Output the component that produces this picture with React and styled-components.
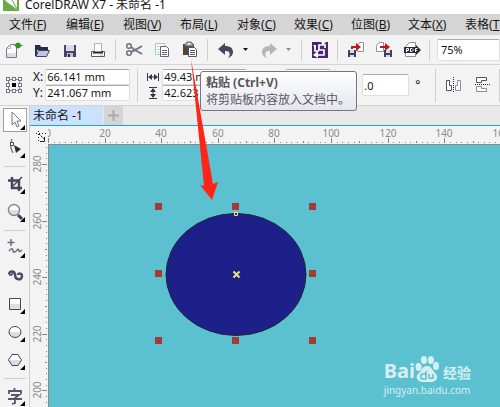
import React from "react";
import styled, { createGlobalStyle } from "styled-components";

const Global = createGlobalStyle`
  *, *::before, *::after { box-sizing: border-box; }
  html, body, #root { height: 100%; }
  body {
    margin: 0;
    overflow: hidden;
    background: #f3f3f3;
    color: #151515;
    font: 12px/16px "Noto Sans", "Noto Sans CJK SC", sans-serif;
  }
  button, input {
    font: inherit;
    color: inherit;
    margin: 0;
  }
  button { padding: 0; border: 0; background: none; }
  svg { display: block; flex: none; }
`;

const Window = styled.div`
  position: relative;
  display: flex;
  flex-direction: column;
  height: 100%;
  overflow: hidden;
`;

const TitleBar = styled.header`
  display: flex;
  align-items: flex-end;
  gap: 6px;
  height: 14px;
  flex: none;
  padding-left: 3px;
  overflow: hidden;
  background: #fff;
  white-space: nowrap;
`;

const Title = styled.span`
  line-height: 16px;
  padding-bottom: 1px;
`;

const LogoBox = styled.span`
  padding-bottom: 3px;
`;

const MenuBar = styled.nav`
  display: flex;
  gap: 18px;
  height: 21px;
  flex: none;
  padding-left: 9px;
  background: #d5d5d5;
`;

const MenuItem = styled.button`
  flex: none;
  min-width: 39px;
  line-height: 21px;
  text-align: left;
  white-space: nowrap;
`;

const ToolBar = styled.div`
  display: flex;
  align-items: center;
  height: 30px;
  flex: none;
  border-bottom: 1px solid #d4d4d4;
`;

const ToolButton = styled.button`
  display: flex;
  align-items: center;
  justify-content: center;
  flex: none;
  width: ${(p) => (p.$narrow ? 10 : 28)}px;
  height: 28px;
  margin-right: ${(p) => (p.$narrow ? 5 : 0)}px;
`;

const Divider = styled.span`
  flex: none;
  width: 1px;
  height: ${(p) => (p.$tall ? 33 : 22)}px;
  margin: 0 4px 0 3px;
  background: #cfcfcf;
`;

const ToolDivider = styled.span`
  flex: none;
  width: 22px;
  height: 1px;
  margin: 4px 0 3px 4px;
  background: #cfcfcf;
`;

const Field = styled.input`
  min-width: 0;
  width: ${(p) => p.$width}px;
  height: ${(p) => p.$height}px;
  padding: 0 1px;
  border: 1px solid #dedede;
  border-top-color: #a9a9b0;
  border-radius: 2px;
  background: #fff;
  font-size: 11px;
  flex: none;
  outline: 0;
`;

const ZoomField = styled(Field)`
  flex: 1;
  margin-left: 3px;
  padding-left: 3px;
`;

const PropertyBar = styled.div`
  display: flex;
  align-items: center;
  height: 41px;
  flex: none;
  padding-left: 5px;
  border-bottom: 1px solid #d4d4d4;
`;

const FieldPair = styled.div`
  display: grid;
  grid-template-columns: auto auto;
  grid-auto-rows: 16px;
  column-gap: 2px;
  align-items: center;
  margin: 0 ${(p) => p.$after}px 0 ${(p) => p.$before}px;
`;

const Label = styled.label`
  line-height: 16px;
`;

const AngleLabel = styled.label`
  display: flex;
  align-items: center;
  gap: 6px;
  margin: 0 12px 0 23px;
`;

const Workspace = styled.div`
  display: flex;
  flex: 1;
  min-height: 0;
`;

const Toolbox = styled.aside`
  display: flex;
  flex-direction: column;
  width: 30px;
  flex: none;
  border-right: 1px solid #cdcdcd;
  overflow: hidden;
`;

const Tool = styled.button`
  display: flex;
  align-items: center;
  justify-content: center;
  flex: none;
  width: 24px;
  height: 24px;
  margin: 2px 3px;
  border: 1px solid ${(p) => (p.$active ? "#a0a0a0" : "transparent")};
  background: ${(p) => (p.$active ? "#fff" : "none")};
`;

const DocumentArea = styled.main`
  display: flex;
  flex-direction: column;
  flex: 1;
  min-width: 0;
`;

const Tabs = styled.div`
  display: flex;
  gap: 1px;
  height: 20px;
  flex: none;
  background: #e9e9e9;
  border-bottom: 1px solid #18a4e8;
`;

const Tab = styled.button`
  width: 73px;
  padding-left: 3px;
  line-height: 18px;
  text-align: left;
  white-space: nowrap;
  background: #cce1ff;
`;

const AddTab = styled.button`
  display: grid;
  place-items: center;
  width: 19px;
  background: #d5d5d5;
`;

const DrawingGrid = styled.div`
  display: grid;
  grid-template: 18px 1fr / 18px 1fr;
  flex: 1;
  min-height: 0;
`;

const Ruler = styled.div`
  overflow: hidden;
  min-width: 0;
  min-height: 0;

  text {
    font: 10px "Noto Sans", sans-serif;
    fill: #8b8b8b;
    text-anchor: middle;
  }
`;

const Canvas = styled.div`
  position: relative;
  overflow: hidden;
  min-height: 0;
  border: solid #858b8d;
  border-width: 1px 0 0 1px;
  background: #5bc0cf;
`;

const Artwork = styled.svg`
  position: absolute;
  left: 0;
  top: 0;
`;

const Tooltip = styled.div`
  position: absolute;
  left: 200px;
  top: 71px;
  width: 157px;
  height: 40px;
  padding: 2px 5px;
  border: 1px solid #767676;
  border-radius: 3px;
  background: linear-gradient(#fff, #e4e5f0);
  color: #575757;
  line-height: 18px;
  white-space: nowrap;
`;

const TipTitle = styled.strong`
  display: block;
  line-height: 17px;
`;

const Pointer = styled.svg`
  position: absolute;
  left: 185px;
  top: 55px;
  pointer-events: none;
`;

const Watermark = styled.div`
  position: absolute;
  right: 29px;
  bottom: 10px;
  color: #d5eff3;
  font-size: 10px;
  line-height: 14px;
`;

const Brand = styled.div`
  display: flex;
  align-items: flex-end;
  height: 30px;
  font: bold 20px/24px "Noto Sans", sans-serif;
`;

const BrandName = styled.span`
  margin-left: 4px;
  font: bold 14px/22px "Noto Sans CJK SC", sans-serif;
`;

const INK = "#46455f";

const Icon = ({ size = 18, children }) => (
  <svg width={size} height={size} viewBox={`0 0 ${size} ${size}`} fill="none" stroke={INK} aria-hidden="true">
    {children}
  </svg>
);

const NewIcon = () => (
  <Icon>
    <path d="M1.5 7.500 5.500 3.500H11.500V16.500H1.500z" fill="#fff" stroke="#777789" />
    <path d="M1.500 7.500h4v-4M3 13h7" stroke="#b9b9c8" />
    <path d="M2 12h9v4H2z" fill="#dedee6" stroke="none" />
    <circle cx="13" cy="4.500" r="2.800" fill="#32951b" stroke="none" />
    <path d="M9.500 4.500h8M13 1.500v6" stroke="#32951b" />
  </Icon>
);
const OpenIcon = () => (
  <Icon>
    <path d="M2 4h5l1 2h7v3H4v6H2z" fill="#292c48" stroke="none" />
    <path d="M5.5 9.5h11l-3 6H3z" fill="#c4c5e3" />
  </Icon>
);
const SaveIcon = () => (
  <Icon>
    <path d="M3 4h12v12H3z" fill="#454567" stroke="none" />
    <path d="M5 4h8v6H5z" fill="#d9daed" stroke="none" />
    <path d="M6 12h6v4H6z" fill="#c1c1d0" stroke="none" />
    <path d="M7 13h2v3H7z" fill="#292c48" stroke="none" />
  </Icon>
);
const PrintIcon = () => (
  <Icon>
    <path d="M2.5 10.5h13v5h-13z" fill="#f9f9fc" stroke="#57576b" />
    <path d="M5.5 11V2.5h7V11" fill="#fff" stroke="#92bfc1" />
    <path d="M4 11.5h10" stroke="#25253b" strokeWidth="2" />
    <path d="M11 14h3" stroke="#bacb35" />
  </Icon>
);
const CutIcon = () => (
  <Icon>
    <circle cx="4" cy="5" r="2.3" strokeWidth="1.5" stroke="#6e6e84" />
    <circle cx="4" cy="12" r="2.3" strokeWidth="1.5" stroke="#6e6e84" />
    <path d="m6 6 4 3 7 4M6 11l4-2 7-4" stroke="#777783" strokeWidth="2" />
  </Icon>
);
const CopyIcon = () => (
  <Icon>
    <path d="M2.5 2.5h9v11h-9z" fill="#f7ffff" stroke="#a4cac5" />
    <path d="M4.5 5.5h2M4.5 8.5h2M4.5 11.5h2" stroke="#a4cac5" />
    <path d="M7.5 5.5h6l2 2v8h-8z" fill="#fff" stroke="#656577" />
    <path d="M9 9.5h5M9 11.5h5M9 13.5h5" stroke="#626277" />
  </Icon>
);
const PasteIcon = () => (
  <Icon>
    <path d="M2 3h11v11H2z" fill="#554735" stroke="none" />
    <path d="M4 5V3l2-2h4l2 2v2z" fill="#a9b7a7" stroke="#566b63" />
    <circle cx="8" cy="3" r="1" fill="#fff" stroke="none" />
    <path d="M7.5 6.5h6l2 2v7h-8z" fill="#fff" stroke="#55556c" />
    <path d="M9 9.5h5M9 11.5h5M9 13.5h5" stroke="#555570" />
  </Icon>
);
const UndoIcon = ({ redo }) => (
  <Icon>
    <path
      transform={redo ? "matrix(-1 0 0 1 18 0)" : undefined}
      d="M8 2v3c5 0 8 2 8 6 0 3-2 5-5 6 2-2 2-5 1-6-1-1-2-1-4-1v4L1 8z"
      fill={redo ? "#b5b5b5" : INK}
      stroke="none"
    />
  </Icon>
);
const Caret = ({ muted }) => (
  <svg width="5" height="4" viewBox="0 0 5 4" aria-hidden="true">
    <path d="M0 0h5L2.5 3z" fill={muted ? "#919191" : "#111"} />
  </svg>
);
const ConnectIcon = () => (
  <Icon>
    <path d="M1 1h16v16H1z" fill="#49266e" stroke="none" />
    <path d="M12 1v3H8v5h5v5H5M4 4v6h4M14 7V3" stroke="#fff" strokeWidth="1.7" />
    <path d="m7 10-5 4 5 3z" fill="#fff" stroke="none" />
    <path d="m10 1 5 0-3 3zM2 4h3v4z" fill="#fff" stroke="none" />
  </Icon>
);
const Disk = () => (
  <>
    <path d="M0 0h8v7H0z" fill="#40405f" stroke="none" />
    <path d="M2 0h4v3H2zM2 5h4v2H2z" fill="#d9daf0" stroke="none" />
  </>
);
const ImportIcon = () => (
  <Icon>
    <path d="M10.5 3.5 13 1.5h3.5v9h-6z" fill="#fff" stroke="#8e929b" />
    <g transform="translate(1 9)"><Disk /></g>
    <path d="M4 8V5h5V2l5 4-5 4V7H6v1z" fill="#c01818" stroke="none" />
  </Icon>
);
const ExportIcon = () => (
  <Icon>
    <path d="M1.5 4.5 4 1.5h4.5v9h-7z" fill="#fff" stroke="#8e929b" />
    <g transform="translate(9 9)"><Disk /></g>
    <path d="M5 7V5h5V2l5 4-5 4V7z" fill="#c01818" stroke="none" />
  </Icon>
);
const PdfIcon = () => (
  <Icon>
    <path d="M2.5 15.5v-10l4-4h6v14z" fill="#fff" stroke="#8b8b98" />
    <path d="M1 6h12V4l5 5-5 5v-2H1z" fill="#292a40" stroke="none" />
    <path d="M3.5 11V7.5h2v2h-2M7.5 10.5v-3H9l1 1v1l-1 1zM12.5 11V7.5h2M12.5 9.5H14" stroke="#fff" />
  </Icon>
);
const OriginIcon = () => (
  <Icon>
    <path d="M3.5 3.5h11v11h-11z" stroke="#81819a" />
    {[1, 7, 13].flatMap((x) =>
      [1, 7, 13].map((y) => {
        const middle = x === 7 && y === 7;
        return (
          <rect key={`${x}-${y}`} x={x + 0.5} y={y + 0.5} width="3" height="3"
            fill={middle ? "#000" : "#fff"} stroke={middle ? "#000" : "#74748c"} />
        );
      })
    )}
  </Icon>
);
const WidthIcon = ({ vertical }) => (
  <Icon size={14}>
    <g transform={vertical ? "rotate(90 7 7)" : undefined}>
      <path d="M1.5 3v8M12.5 3v8M3 7h8" stroke="#34344a" />
      <path d="m2 7 4-3v6zM12 7 8 4v6z" fill="#34344a" stroke="none" />
    </g>
  </Icon>
);
const MirrorIcon = ({ vertical }) => (
  <Icon>
    <g transform={vertical ? "rotate(90 9 9)" : undefined}>
      <path d="M8.5 1v16" stroke="#222" strokeDasharray="1 1" />
      <path d="M1.5 4.5h3v5h2v5h-5z" fill="#fff" stroke="#515168" />
      <path d="M15.5 4.5h-3v5h-2v5h5z" fill="#fff" stroke="#8c8ca0" />
    </g>
  </Icon>
);

const Corner = () => <path d="M21 16v5h-5z" fill="#000" stroke="none" />;
const toolDrawings = {
  pick: <path d="M8 3v13l3-3 2 5 2-1-2-5h4z" fill="#fff" stroke="#77778b" />,
  shape: (
    <>
      <path d="M8 2c-2 5-2 9 1 14" stroke="#777789" strokeWidth="1.4" />
      <path d="M6.500 5.500h3v3h-3z" fill="#fff" />
      <path d="m10 8 7 4-5 4z" fill="#292b42" stroke="none" />
    </>
  ),
  crop: (
    <>
      <path d="M8 4v11h10M4 7.500h11V18" strokeWidth="2.500" stroke="#44445c" />
      <path d="M8 14 18 4" strokeWidth="1.500" />
    </>
  ),
  zoom: (
    <>
      <circle cx="10" cy="9" r="5.500" fill="url(#metal)" stroke="#858596" strokeWidth="1.400" />
      <path d="m14 14 4 4" stroke="#3e3e55" strokeWidth="3" />
    </>
  ),
  freehand: <path d="M7 2v7M3.500 5.500h7M5 14c3-4 4-2 4 0s3 1 4-1 2 0 2 1 2 0 3-1" stroke="#6d6d81" strokeWidth="1.500" />,
  artistic: (
    <>
      <path d="M5 9c1-4 6-3 6 1 0 5 7 6 7 1 0-3-4-3-4-1" stroke="#4c4b63" strokeWidth="2.500" />
      <path d="M5 9c1 2 4 1 3-1" strokeWidth="1.500" />
    </>
  ),
  rectangle: <path d="M5.500 5.500h11v11h-11z" fill="url(#metal)" />,
  ellipse: <ellipse cx="11" cy="11" rx="6" ry="5.500" fill="url(#metal)" />,
  polygon: <path d="m4.500 11 3.500-5.500h6l3.500 5.500-3.500 5.500H8z" fill="url(#metal)" />,
  text: <path d="M10.500 3v3M5 9V6h12v3M7 10h8l-4 3v5l-3 1M4 14h14" strokeWidth="1.800" stroke="#57576b" />,
};
const ToolIcon = ({ name }) => (
  <Icon size={22}>
    <defs>
      <linearGradient id="metal" x2="0" y2="1">
        <stop offset="0.500" stopColor="#fff" />
        <stop offset="0.500" stopColor="#dddde6" />
      </linearGradient>
    </defs>
    {toolDrawings[name]}
    {name !== "artistic" && <Corner />}
  </Icon>
);

const menus = [
  ["文件", "F"], ["编辑", "E"], ["视图", "V"], ["布局", "L"], ["对象", "C"],
  ["效果", "C"], ["位图", "B"], ["文本", "X"], ["表格", "T"],
];

const toolGroups = [
  [["pick", "选择"], ["shape", "形状"]],
  [["crop", "裁剪"], ["zoom", "缩放"]],
  [["freehand", "手绘"], ["artistic", "艺术笔"], ["rectangle", "矩形"], ["ellipse", "椭圆形"], ["polygon", "多边形"]],
  [["text", "文本"]],
];

const UNIT = 56.6;
const ticks = Array.from({ length: 90 }, (_, i) => i);
const tickLength = (i) => (i % 10 === 0 ? 5 : i % 5 === 0 ? 2 : 1);

const HorizontalRuler = () => (
  <Ruler>
    <svg width="480" height="18">
      {ticks.map((i) => {
        const x = Math.round((i * UNIT) / 10) + 0.5;
        return <path key={i} d={`M${x} 17v-${tickLength(i)}`} stroke="#858585" />;
      })}
      {[0, 20, 40, 60, 80, 100, 120, 140, 160].map((v) => (
        <text key={v} x={Math.round((v / 20) * UNIT)} y="11">{v}</text>
      ))}
    </svg>
  </Ruler>
);

const VerticalRuler = () => (
  <Ruler>
    <svg width="18" height="280">
      {ticks.slice(0, 53).map((i) => {
        const y = Math.round(20 + ((i - 10) * UNIT) / 10) + 0.5;
        return <path key={i} d={`M17 ${y}h-${tickLength(i)}`} stroke="#858585" />;
      })}
      {[280, 260, 240, 220, 200].map((v, i) => {
        const y = Math.round(20 + i * UNIT);
        return <text key={v} transform={`translate(11 ${y}) rotate(-90)`}>{v}</text>;
      })}
    </svg>
  </Ruler>
);

const CornerMark = () => (
  <svg width="18" height="18" viewBox="0 0 18 18" stroke="#222" fill="none" aria-hidden="true">
    <path d="M8.500 5v10M6 7.500h10" strokeDasharray="1 2" />
    <path d="m9 8 5 5" strokeDasharray="2 1" />
    <path d="M14.500 11v4.500H10" />
  </svg>
);

const Shape = () => (
  <Artwork width="300" height="240" aria-label="椭圆">
    <ellipse cx="187" cy="129.500" rx="70" ry="61" fill="#1d2088" stroke="#202530" />
    {[106, 183, 260].flatMap((x) =>
      [58, 125, 192].map((y) =>
        x === 183 && y === 125 ? null : <rect key={`${x}-${y}`} x={x} y={y} width="7" height="7" fill="#a43c31" />
      )
    )}
    <path d="M185.500 67.500h3v3h-3z" fill="#6b2732" stroke="#e8ddb0" />
    <path d="m184.500 126.500 6 6m0-6-6 6" stroke="#ece57d" strokeWidth="2" />
  </Artwork>
);

export default function App() {
  return (
    <>
      <Global />
      <Window>
        <TitleBar>
          <LogoBox>
            <svg width="16" height="16" viewBox="0 0 16 16" aria-hidden="true">
              <path d="M0 0h16v16H0z" fill="#65ad45" />
              <path d="M2 5h3l3-1 6 11C10 10 5 9 2 5zM9 4l5 9V4z" fill="#fff" />
            </svg>
          </LogoBox>
          <Title>CorelDRAW X7 - 未命名 -1</Title>
        </TitleBar>
        <MenuBar>
          {menus.map(([name, key]) => (
            <MenuItem key={name}>{name}(<u>{key}</u>)</MenuItem>
          ))}
        </MenuBar>
        <ToolBar>
          <ToolButton aria-label="新建"><NewIcon /></ToolButton>
          <ToolButton aria-label="打开"><OpenIcon /></ToolButton>
          <ToolButton aria-label="保存"><SaveIcon /></ToolButton>
          <ToolButton aria-label="打印"><PrintIcon /></ToolButton>
          <Divider />
          <ToolButton aria-label="剪切"><CutIcon /></ToolButton>
          <ToolButton aria-label="复制"><CopyIcon /></ToolButton>
          <ToolButton aria-label="粘贴"><PasteIcon /></ToolButton>
          <Divider />
          <ToolButton aria-label="撤消"><UndoIcon /></ToolButton>
          <ToolButton $narrow aria-label="撤消列表"><Caret /></ToolButton>
          <ToolButton aria-label="重做"><UndoIcon redo /></ToolButton>
          <ToolButton $narrow aria-label="重做列表"><Caret muted /></ToolButton>
          <Divider />
          <ToolButton aria-label="连接"><ConnectIcon /></ToolButton>
          <Divider />
          <ToolButton aria-label="导入"><ImportIcon /></ToolButton>
          <ToolButton aria-label="导出"><ExportIcon /></ToolButton>
          <ToolButton aria-label="发布为 PDF"><PdfIcon /></ToolButton>
          <Divider />
          <ZoomField $height={22} aria-label="缩放级别" defaultValue="75%" />
        </ToolBar>
        <PropertyBar>
          <OriginIcon />
          <FieldPair $before={10} $after={4}>
            <Label htmlFor="pos-x">X:</Label>
            <Field id="pos-x" $width={85} $height={16} defaultValue="66.141 mm" />
            <Label htmlFor="pos-y">Y:</Label>
            <Field id="pos-y" $width={85} $height={16} defaultValue="241.067 mm" />
          </FieldPair>
          <Divider $tall />
          <FieldPair $before={4} $after={38}>
            <WidthIcon />
            <Field $width={85} $height={16} aria-label="宽度" defaultValue="49.43 mm" />
            <WidthIcon vertical />
            <Field $width={85} $height={16} aria-label="高度" defaultValue="42.623 mm" />
          </FieldPair>
          <Field $width={46} $height={32} aria-label="缩放因子" />
          <Divider $tall />
          <AngleLabel>
            <Field $width={47} $height={22} aria-label="旋转角度" defaultValue=".0" />
            °
          </AngleLabel>
          <Divider $tall />
          <ToolButton aria-label="水平镜像"><MirrorIcon /></ToolButton>
          <ToolButton aria-label="垂直镜像"><MirrorIcon vertical /></ToolButton>
          <Divider $tall />
        </PropertyBar>
        <Workspace>
          <Toolbox>
            {toolGroups.map((group, g) => (
              <React.Fragment key={g}>
                {g > 0 && <ToolDivider />}
                {group.map(([name, label]) => (
                  <Tool key={name} $active={name === "pick"} aria-label={label}><ToolIcon name={name} /></Tool>
                ))}
              </React.Fragment>
            ))}
          </Toolbox>
          <DocumentArea>
            <Tabs>
              <Tab>未命名 -1</Tab>
              <AddTab aria-label="新建文档">
                <svg width="11" height="11"><path d="M5.500 0v11M0 5.500h11" stroke="#aaa" strokeWidth="2" /></svg>
              </AddTab>
            </Tabs>
            <DrawingGrid>
              <CornerMark />
              <HorizontalRuler />
              <VerticalRuler />
              <Canvas>
                <Shape />
                <Watermark>
                  <Brand>
                    Bai
                    <svg width="24" height="28" viewBox="0 0 24 28" fill="#d5eff3" aria-hidden="true">
                      <ellipse cx="3.500" cy="12" rx="3" ry="4" />
                      <ellipse cx="9" cy="5" rx="3" ry="4" />
                      <ellipse cx="16" cy="5" rx="3" ry="4" />
                      <ellipse cx="21" cy="11" rx="3" ry="4" />
                      <path d="M12 11c5 0 5 4 8 7 5 5 0 9-4 9H8c-5 0-9-5-4-9 3-3 3-7 8-7z" />
                      <path d="M11 16v8H8c-3 0-3-5 0-5h3M14 19v3c0 2 4 2 4 0v-3 5" fill="none" stroke="#5bc0cf" strokeWidth="1.500" />
                    </svg>
                    <BrandName>经验</BrandName>
                  </Brand>
                  jingyan.baidu.com
                </Watermark>
              </Canvas>
            </DrawingGrid>
          </DocumentArea>
        </Workspace>
        <Tooltip role="tooltip">
          <TipTitle>粘贴 (Ctrl+V)</TipTitle>
          将剪贴板内容放入文档中。
        </Tooltip>
        <Pointer width="40" height="150" aria-hidden="true">
          <path d="M6 4 28 129l5-2-6 18-12-15 4 1z" fill="#ff2417" />
        </Pointer>
      </Window>
    </>
  );
}
